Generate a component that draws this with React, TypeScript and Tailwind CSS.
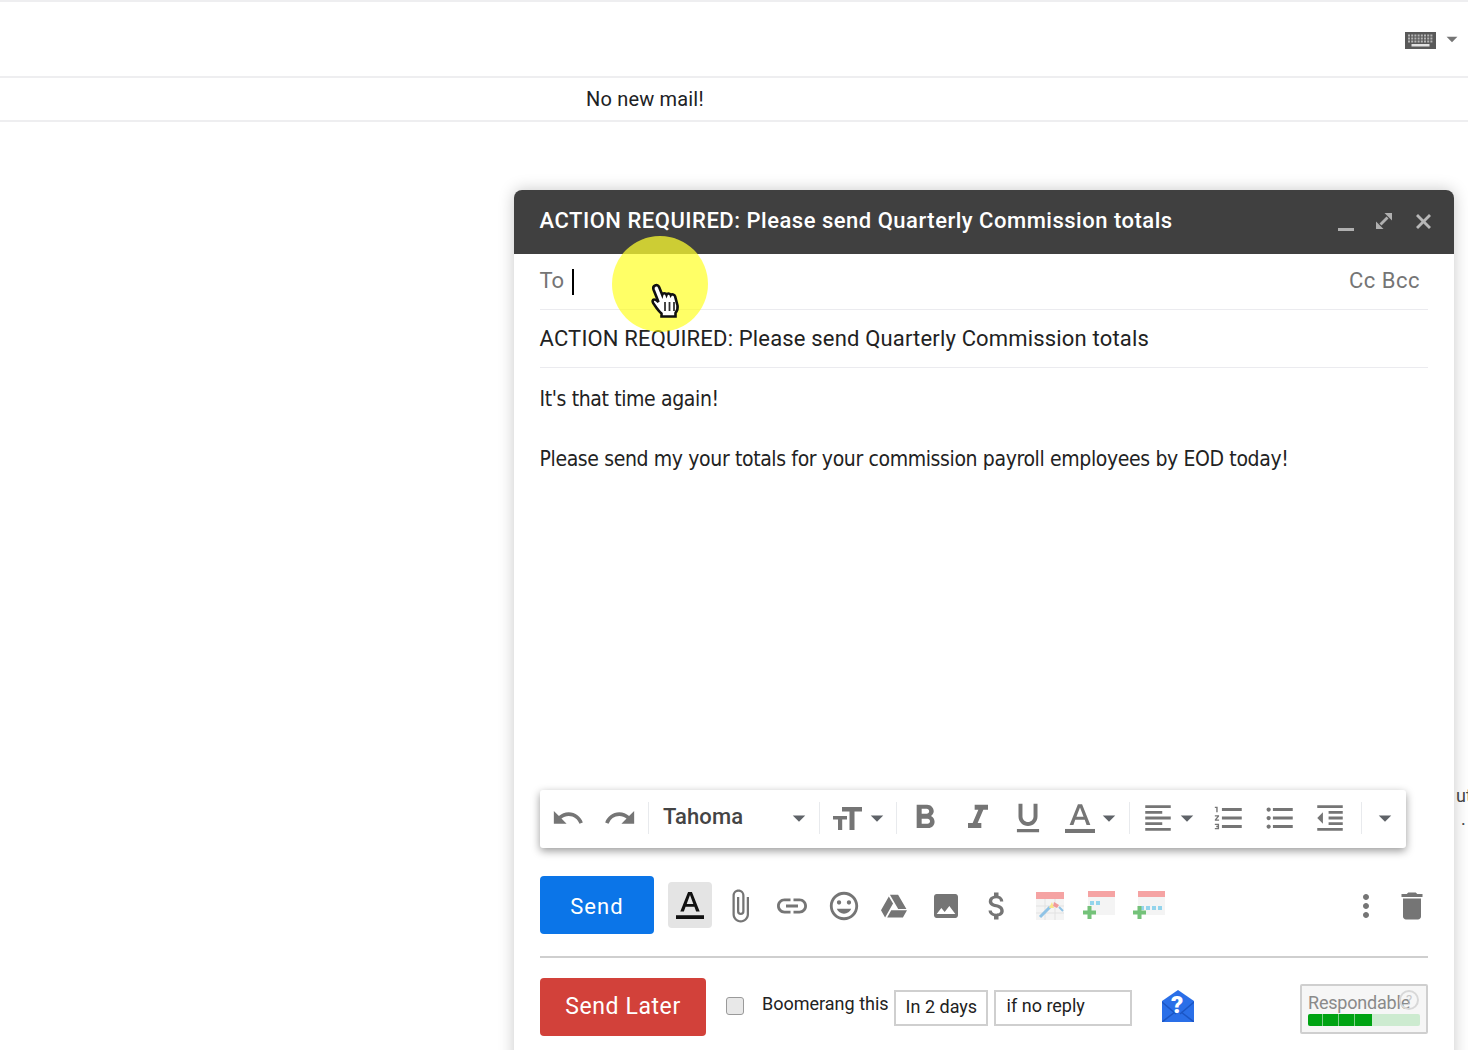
import {
  MdUndo,
  MdRedo,
  MdArrowDropDown,
  MdFormatBold,
  MdFormatItalic,
  MdFormatUnderlined,
  MdFormatAlignLeft,
  MdFormatListNumbered,
  MdFormatListBulleted,
  MdFormatIndentDecrease,
  MdAttachFile,
  MdLink,
  MdInsertEmoticon,
  MdPhoto,
  MdAttachMoney,
  MdMoreVert,
  MdDelete,
} from "react-icons/md";
import { FaGoogleDrive } from "react-icons/fa";

const grey = "#757575";

function Sep() {
  return <div className="w-px h-[32px] bg-[#e8eaed]" />;
}

function Caret({ className = "" }: { className?: string }) {
  return <MdArrowDropDown size={30} color="#5f6368" className={className} />;
}

function KeyboardIcon() {
  const keys = [];
  for (let r = 0; r < 3; r++) {
    for (let c = 0; c < 8; c++) {
      keys.push(<rect key={r + "-" + c} x={3 + c * 3.2} y={2.5 + r * 3} width="2" height="2" fill="#b5b5b5" />);
    }
  }
  return (
    <svg width="31" height="17" viewBox="0 0 31 17" className="mt-[2px]">
      <rect width="31" height="17" fill="#595959" />
      {keys}
      <rect x="6.5" y="12" width="18" height="2.5" fill="#e2e2e2" />
    </svg>
  );
}

function TextSize() {
  return (
    <svg width="30" height="24" viewBox="0 0 30 24" fill={grey}>
      <path d="M9 1h20v4.5h-7.5V24h-5V5.5H9z" />
      <path d="M0 10h14v3.5H9.2V24H5V13.5H0z" />
    </svg>
  );
}

function ColorA({ color, size = 30 }: { color: string; size?: number }) {
  return (
    <svg width={size} height={size} viewBox="0 0 26 26" fill={color}>
      <path d="M11.2 1h3.6l7.2 18h-3.3l-1.6-4.4H8.900L7.3 19H4zM9.900 12h6.2L13 3.800z" />
      <rect x="0" y="22.5" width="26" height="3.5" />
    </svg>
  );
}

function ExpandIcon() {
  return (
    <svg width="18" height="18" viewBox="0 0 18 18" fill="#b0b0b0">
      <path d="M9.500 1H17v7.500z" />
      <path d="M8.500 17H1V9.500z" />
      <path d="M4.500 11.500L11.500 4.500l2 2-7 7z" />
    </svg>
  );
}

function CloseIcon() {
  return (
    <svg width="15" height="15" viewBox="0 0 15 15" fill="#b8b8b8">
      <path d="M2 0L7.500 5.500 13 0l2 2-5.500 5.500L15 13l-2 2-5.500-5.500L2 15l-2-2 5.500-5.500L0 2z" />
    </svg>
  );
}

function ChartCal() {
  return (
    <svg width="28" height="28" viewBox="0 0 28 28" className="blur-[0.4px]">
      <rect width="28" height="28" fill="#f4f4f4" />
      <rect width="28" height="7" fill="#f5a3a3" />
      <path d="M0 14h28M0 21h28M9 7v21M19 7v21" stroke="#e2e2e2" strokeWidth="1" />
      <path d="M4 25 L14 15" stroke="#8fc3e6" strokeWidth="3" />
      <path d="M13 16 l3-6 2 6z" fill="#f9e58a" />
      <path d="M18 10 l5 3-2 3-4-2z" fill="#f19a9a" />
      <path d="M23 15 l4 4" stroke="#8fc3e6" strokeWidth="2" />
    </svg>
  );
}

function AddCal({ dots, dotY }: { dots: number; dotY: number }) {
  return (
    <svg width="34" height="30" viewBox="0 0 34 30" className="blur-[0.3px]">
      <rect x="5" y="0" width="27" height="24" fill="#f4f4f4" />
      <rect x="5" y="0" width="27" height="6" fill="#f5a3a3" />
      {Array.from({ length: dots }).map((_, i) => (
        <rect key={i} x={7 + i * 6} y={dotY} width="4" height="4" fill="#93d4ec" />
      ))}
      <path d="M4.500 15h4v4.500H13v4H8.500V28h-4v-4.500H0v-4h4.500z" fill="#74c279" />
    </svg>
  );
}

function BoomerangIcon() {
  return (
    <svg width="32" height="32" viewBox="0 0 32 32">
      <path d="M16 0 L32 11 V32 H0 V11Z" fill="#2a6fe8" />
      <path d="M0 12 L14 24 M32 12 L18 24 M0 32 L13 22 M32 32 L19 22" stroke="#1b55c4" strokeWidth="1.5" />
      <text x="15" y="23" textAnchor="middle" fontSize="24" fontWeight="900" fill="#fff" fontFamily="Roboto, sans-serif">
        ?
      </text>
    </svg>
  );
}

function HandCursor() {
  return (
    <svg width="32" height="36" viewBox="0 0 32 36">
      <path
        d="M5 2.500c2-1 3.500 0 4.200 1.800l3 7.500c.5-2 3.500-2 4.300 0 .6-1.700 3.600-1.700 4.300.3.900-1.300 3.700-.8 4.300 1.200l2.400 9.200c.6 3-.4 5.400-2 7.500v3.500H11.500v-3c-2.500-2-5-5.500-7-8.500-1.600-2-2.800-3.500-1.500-5 1.200-1.200 3-.4 5.500 2L3.500 6.500C3 5 3.500 3.200 5 2.500z"
        fill="#fff"
        stroke="#111"
        strokeWidth="2.6"
      />
      <path d="M15 19v9M19.500 19v9M24 19v9" stroke="#333" strokeWidth="1.8" />
    </svg>
  );
}

export default function App() {
  return (
    <div
      className="relative w-[1468px] h-[1050px] overflow-hidden bg-white text-[#202124]"
      style={{ fontFamily: "Roboto, sans-serif" }}
    >
      <div className="h-[78px] border-t-2 border-b-2 border-[#eeeef0] flex items-center justify-end pr-[3px]">
        <KeyboardIcon />
        <MdArrowDropDown size={26} color={grey} className="ml-[3px]" />
      </div>
      <div className="h-[44px] border-b-2 border-[#eeeef0] pl-[586px] pt-[8px] text-[20px] leading-[26px] tracking-[0.18px]">
        No new mail!
      </div>

      <div className="absolute left-[1456px] top-[785px] text-[18px] leading-[22px] text-[#444] w-[12px] overflow-hidden">
        ut
      </div>
      <div className="absolute left-[1461px] top-[808px] text-[18px] leading-[22px] text-[#444]">.</div>

      <div className="ml-[514px] mt-[68px] w-[940px] h-[900px] rounded-t-lg bg-white shadow-[0_0_16px_rgba(0,0,0,0.22)]">
        <div className="h-[64px] rounded-t-lg bg-[#404040] flex items-center pl-[25.5px] pr-[23px] text-white">
          <span className="text-[22px] font-medium tracking-[0.51px] -mt-[4px]">
            ACTION REQUIRED: Please send Quarterly Commission totals
          </span>
          <div className="ml-auto flex items-center">
            <div className="w-[16px] h-[3px] bg-[#b0b0b0] mt-[14px]" />
            <div className="ml-[21px] -mt-[2px]">
              <ExpandIcon />
            </div>
            <div className="ml-[23px] -mt-[2px]">
              <CloseIcon />
            </div>
          </div>
        </div>

        <div className="ml-[25.5px] mr-[26px] h-[56px] border-b border-[#ebebef] flex items-center text-[22px] text-[#757575]">
          <span className="-mt-[2px]">To</span>
          <div className="w-[2px] h-[26px] bg-black ml-[8px]" />
          <span className="ml-auto mr-[8px] tracking-[0.5px] -mt-[2px]">Cc Bcc</span>
        </div>
        <div className="ml-[25.5px] mr-[26px] h-[58px] border-b border-[#ebebef] flex items-center text-[22px] text-[#222] tracking-[0.17px]">
          ACTION REQUIRED: Please send Quarterly Commission totals
        </div>

        <div className="ml-[25.5px] mr-[26px] pt-[16px] h-[422px] font-['DejaVu_Sans_Condensed',sans-serif] text-[21px] tracking-[-0.37px] leading-[30px] text-[#222]">
          <div>It's that time again!</div>
          <div className="h-[30px]" />
          <div>Please send my your totals for your commission payroll employees by EOD today!</div>
        </div>

        <div className="ml-[26px] w-[866px] h-[58px] pb-[2px] bg-white rounded-[3px] shadow-[0_3px_8px_rgba(0,0,0,0.4)] flex items-center">
          <div className="w-[56px] flex justify-center">
            <MdUndo size={34} color={grey} />
          </div>
          <div className="w-[48px] flex justify-center">
            <MdRedo size={34} color={grey} />
          </div>
          <div className="w-[4px]" />
          <Sep />
          <span className="ml-[14px] w-[121px] text-[22px] font-medium text-[#444] -mt-[3px] tracking-[0.1px]">Tahoma</span>
          <Caret />
          <div className="w-[5px]" />
          <Sep />
          <div className="ml-[13px]">
            <TextSize />
          </div>
          <Caret className="-ml-[1px]" />
          <div className="w-[4px]" />
          <Sep />
          <div className="w-[56px] flex justify-center">
            <MdFormatBold size={40} color={grey} />
          </div>
          <div className="w-[50px] flex justify-center">
            <MdFormatItalic size={40} color={grey} />
          </div>
          <div className="w-[50px] flex justify-center">
            <MdFormatUnderlined size={38} color={grey} />
          </div>
          <div className="w-[54px] flex justify-center">
            <ColorA color={grey} />
          </div>
          <Caret className="-ml-[13px]" />
          <div className="w-[5px]" />
          <Sep />
          <div className="w-[56px] flex justify-center">
            <MdFormatAlignLeft size={34} color={grey} />
          </div>
          <Caret className="-ml-[14px]" />
          <div className="w-[53px] flex justify-center">
            <MdFormatListNumbered size={34} color={grey} />
          </div>
          <div className="w-[49px] flex justify-center">
            <MdFormatListBulleted size={34} color={grey} />
          </div>
          <div className="w-[52px] flex justify-center">
            <MdFormatIndentDecrease size={34} color={grey} />
          </div>
          <div className="w-[5px]" />
          <Sep />
          <Caret className="ml-[8px]" />
        </div>

        <div className="ml-[26px] mt-[28px] flex items-center w-[888px] h-[58px]">
          <div className="w-[114px] h-[58px] pt-[2px] rounded-[4px] bg-[#0b75e8] text-white text-[22px] tracking-[1.1px] flex items-center justify-center">
            Send
          </div>
          <div className="ml-[14px] w-[44px] h-[46px] rounded-[4px] bg-[#e4e4e4] flex items-center justify-center">
            <ColorA color="#111" size={28} />
          </div>
          <div className="flex flex-1 items-center mt-[2px]">
            <div className="ml-[5px] w-[46px] flex justify-center">
              <MdAttachFile size={36} color={grey} />
            </div>
            <div className="w-[58px] flex justify-center">
              <MdLink size={36} color={grey} />
            </div>
            <div className="w-[46px] flex justify-center">
              <MdInsertEmoticon size={34} color={grey} />
            </div>
            <div className="w-[54px] flex justify-center">
              <FaGoogleDrive size={26} color={grey} />
            </div>
            <div className="w-[50px] flex justify-center">
              <MdPhoto size={32} color={grey} />
            </div>
            <div className="w-[52px] flex justify-center">
              <MdAttachMoney size={36} color={grey} />
            </div>
            <div className="w-[54px] flex justify-center">
              <ChartCal />
            </div>
            <div className="w-[46px] flex justify-center">
              <AddCal dots={2} dotY={10} />
            </div>
            <div className="w-[54px] flex justify-center">
              <AddCal dots={4} dotY={15} />
            </div>
            <div className="ml-auto -mr-[2px] flex items-center gap-[10px]">
              <MdMoreVert size={36} color={grey} />
              <MdDelete size={36} color={grey} />
            </div>
          </div>
        </div>

        <div className="ml-[26px] mt-[22px] w-[888px] h-[2px] bg-[#cfcfcf]" />

        <div className="ml-[26px] mt-[20px] w-[888px] flex items-center h-[58px]">
          <div className="w-[166px] h-[58px] rounded-[4px] bg-[#d2413a] text-white text-[23px] tracking-[0.6px] flex items-center justify-center">
            Send Later
          </div>
          <div className="ml-[20px] w-[18px] h-[18px] rounded-[3px] border border-[#9a9a9a] bg-[#e8e8e8] -mt-[2px]" />
          <span className="ml-[18px] text-[18px] -mt-[8px] text-[#222]">Boomerang this</span>
          <div className="ml-[5px] mt-[2px] w-[94px] h-[36px] border-2 border-[#cfcfcf] pl-[10px] text-[18px] leading-[30px] text-[#222]">
            In 2 days
          </div>
          <div className="ml-[6px] mt-[2px] w-[138px] h-[36px] border-2 border-[#cfcfcf] pl-[11px] text-[18px] leading-[28px] text-[#222]">
            if no reply
          </div>
          <div className="ml-[30px] -mt-[2px]">
            <BoomerangIcon />
          </div>
          <div className="relative ml-auto mt-[4px] w-[128px] h-[50px] border-2 border-[#cfcfcf] rounded-[2px] bg-[#f6f6f6] px-[6px] pt-[7px]">
            <div className="text-[18px] leading-[20px] text-[#8a8a8a] whitespace-nowrap tracking-[-0.2px]">Respondable</div>
            <div className="absolute right-[7px] top-[4px] w-[20px] h-[20px] rounded-full border-2 border-[#d8d8d8] text-[#c8c8c8] text-[13px] leading-[16px] text-center">
              ?
            </div>
            <div className="mt-[1px] h-[12px] rounded-[2px] bg-[#cdebd0] overflow-hidden flex w-[112px]">
              <div className="w-[15px] bg-[#00a313] border-r border-[#7fd18a]" />
              <div className="w-[16px] bg-[#00a313] border-r border-[#7fd18a]" />
              <div className="w-[16px] bg-[#00a313] border-r border-[#7fd18a]" />
              <div className="w-[17px] bg-[#00a313]" />
            </div>
          </div>
        </div>
      </div>

      <div className="absolute left-[612px] top-[236px] w-[96px] h-[96px] rounded-full overflow-hidden bg-[#ffff00]/60">
        <div className="h-[18px] bg-[#ffff66]/35" />
        <div className="mt-[29px] ml-[38px]">
          <HandCursor />
        </div>
      </div>
    </div>
  );
}
